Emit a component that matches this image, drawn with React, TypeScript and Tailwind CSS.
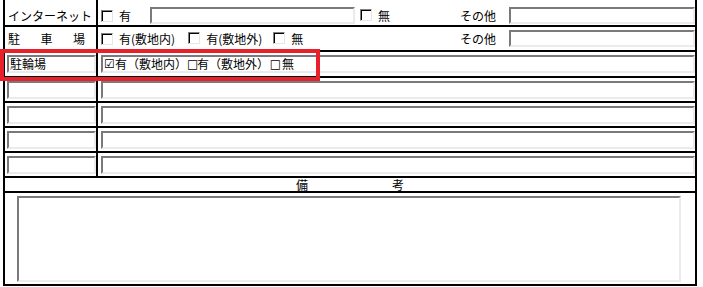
import React from 'react';

const font = "font-['Noto_Sans_CJK_JP','Noto_Sans_CJK_SC',sans-serif] text-[12px] leading-[12px] text-black";
const inset = 'border-2 border-t-[#7a7a7a] border-l-[#7a7a7a] border-r-[#ebebeb] border-b-[#ebebeb] bg-white';

const Check = () => (
    <span className="inline-block w-[12px] h-[12px] shrink-0 border-t border-l border-[#808080] border-r border-b border-r-[#e6e6e6] border-b-[#e6e6e6] shadow-[inset_1px_1px_0_#000] bg-white" />
);

const Row = ({ label, children, h = 'h-[25px]' }: { label?: React.ReactNode; children: React.ReactNode; h?: string }) => (
    <div className={`flex border-b-2 border-black ${h}`}>
        <div className="w-[93px] shrink-0 border-r-2 border-black flex items-center">{label}</div>
        <div className="flex-1 flex items-center">{children}</div>
    </div>
);

const App = () => {
    return (
        <div className={`w-[703px] h-[287px] bg-white overflow-hidden relative ${font}`}>
            <div className="ml-[3px] w-[694px] border-x-2 border-black">
                {/* インターネット */}
                <div className="flex border-b-2 border-black h-[27px]">
                    <div className="w-[93px] shrink-0 border-r-2 border-black flex items-center pt-[6px] pl-[3px]">インターネット</div>
                    <div className="flex-1 flex items-center pt-[6px]">
                        <div className="w-[362px] flex items-center pl-[3px]">
                            <Check />
                            <span className="ml-[6px]">有</span>
                            <div className={`ml-[19px] w-[205px] h-[17px] ${inset}`} />
                            <span className="ml-[5px]"><Check /></span>
                            <span className="ml-[6px]">無</span>
                        </div>
                        <span>その他</span>
                        <div className={`ml-[13px] w-[186px] h-[17px] ${inset}`} />
                    </div>
                </div>

                {/* 駐車場 */}
                <Row label={<div className="flex justify-between w-full pl-[3px] pr-[11px]"><span>駐</span><span>車</span><span>場</span></div>}>
                    <div className="w-[362px] flex items-center pl-[3px]">
                        <Check />
                        <span className="ml-[6px]">有(敷地内)</span>
                        <span className="ml-[13px]"><Check /></span>
                        <span className="ml-[6px]">有(敷地外)</span>
                        <span className="ml-[11px]"><Check /></span>
                        <span className="ml-[6px]">無</span>
                    </div>
                    <span>その他</span>
                    <div className={`ml-[13px] w-[186px] h-[17px] ${inset}`} />
                </Row>

                {/* 駐輪場 */}
                <Row h="h-[26px]" label={<div className={`ml-[2px] w-[89px] h-[18px] flex items-center pl-[1px] ${inset}`}>駐輪場</div>}>
                    <div className={`ml-[3px] w-[594px] h-[18px] flex items-center pl-[1px] ${inset}`}>
                        <span className="inline-block w-[11px] text-center font-['DejaVu_Sans'] text-[12px] leading-[12px]">☑</span>
                        <span>有（敷地内）</span>
                        <span className="inline-block w-[10px] text-center font-['DejaVu_Sans'] text-[12px] leading-[12px]">□</span>
                        <span>有（敷地外）</span>
                        <span className="inline-block w-[13px] text-center font-['DejaVu_Sans'] text-[12px] leading-[12px]">□</span>
                        <span>無</span>
                    </div>
                </Row>

                {[0, 1, 2, 3].map((i) => (
                    <Row key={i} label={<div className={`ml-[2px] w-[89px] h-[18px] ${inset}`} />}>
                        <div className={`ml-[3px] w-[594px] h-[18px] ${inset}`} />
                    </Row>
                ))}

                {/* 備考 */}
                <div className="h-[15px] border-b-2 border-black flex items-center justify-center">
                    備　　　　　　　考
                </div>
                <div className="h-[93px] border-b-2 border-black pt-[3px]">
                    <div className={`ml-[12px] w-[664px] h-[86px] ${inset}`} />
                </div>
            </div>

            {/* highlight */}
            <div className="absolute left-0 top-[49px] w-[320px] h-[32px] border-4 border-[#e8202a]" />
        </div>
    );
};

export default App;
